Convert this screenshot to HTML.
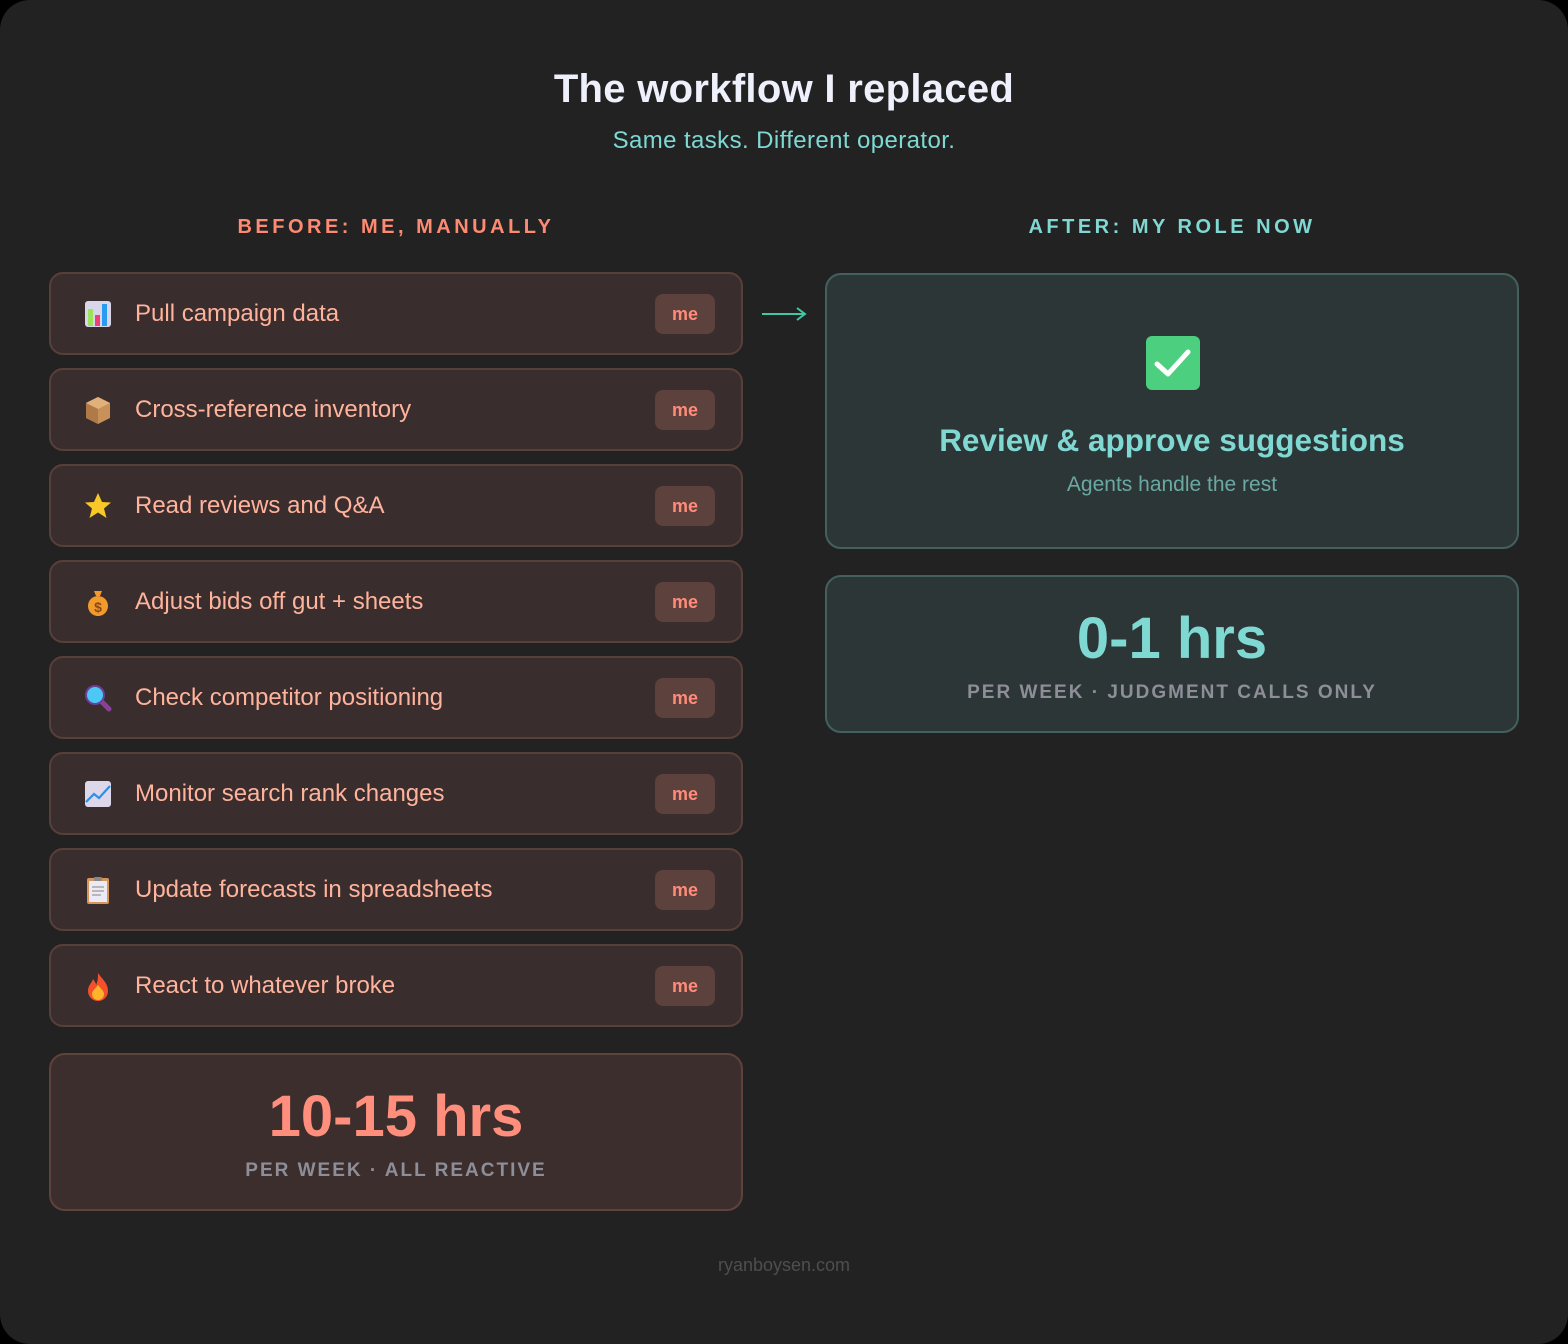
<!DOCTYPE html>
<html><head><meta charset="utf-8"><style>
*{box-sizing:border-box;margin:0;padding:0}
html,body{width:1568px;height:1344px;background:#000;overflow:hidden}
body{font-family:"Liberation Sans",sans-serif}
.wrap{position:absolute;left:0;top:0;width:1568px;height:1344px;background:#222222;border-radius:30px}
.abs{position:absolute}
h1{position:absolute;top:67px;width:100%;text-align:center;color:#eef0fb;font-size:40px;font-weight:bold;letter-spacing:0.3px}
.sub{top:127px;width:100%;text-align:center;color:#7fd8d2;font-size:24px;letter-spacing:0.4px}
.hd{top:216px;font-size:20px;font-weight:bold;letter-spacing:3.5px;text-align:center}
.card{position:absolute;left:49px;width:694px;height:83px;background:#3a2d2d;border:2px solid #573f3a;border-radius:14px}
.card .ic{position:absolute;left:32px;top:25px;width:30px;height:30px}
.card .t{position:absolute;left:84px;top:26px;font-size:24px;color:#ffb39c}
.card .me{position:absolute;left:604px;top:20px;width:60px;height:40px;background:#5c413c;border-radius:8px;color:#ff8b78;font-weight:bold;font-size:18px;text-align:center;line-height:40px}
.big{position:absolute;border-radius:16px;text-align:center}
</style></head><body><div class="wrap">
<h1>The workflow I replaced</h1>
<div class="abs sub">Same tasks. Different operator.</div>
<div class="abs hd" style="left:49px;width:694px;color:#ff8a72">BEFORE: ME, MANUALLY</div>
<div class="abs hd" style="left:825px;width:694px;color:#7fd8d2">AFTER: MY ROLE NOW</div>

<div class="card" style="top:272px"><svg class="ic" viewBox="0 0 30 30"><rect x="2" y="2" width="26" height="26" rx="3" fill="#d8d6e8"/><rect x="5" y="10" width="5" height="17" fill="#9be35a"/><rect x="12" y="16" width="5" height="11" fill="#ef3f7b"/><rect x="19" y="5" width="5" height="22" fill="#2a9bf0"/></svg><div class="t">Pull campaign data</div><div class="me">me</div></div>
<div class="card" style="top:368px"><svg class="ic" viewBox="0 0 30 30"><path d="M15 2L27 8V23L15 29L3 23V8Z" fill="#c8915a"/><path d="M3 8L15 14L27 8L15 2Z" fill="#e2b07a"/><path d="M15 14V29L3 23V8Z" fill="#b07a48"/></svg><div class="t">Cross-reference inventory</div><div class="me">me</div></div>
<div class="card" style="top:464px"><svg class="ic" viewBox="0 0 30 30"><path d="M15 2L19 11L28 11.5L21 17.5L23.5 27L15 21.5L6.5 27L9 17.5L2 11.5L11 11Z" fill="#f8c829"/></svg><div class="t">Read reviews and Q&amp;A</div><div class="me">me</div></div>
<div class="card" style="top:560px"><svg class="ic" viewBox="0 0 30 30"><circle cx="15" cy="19" r="10" fill="#f39a2c"/><path d="M11 4h8l-2 5h-4z" fill="#f39a2c"/><text x="15" y="25" font-size="14" font-weight="bold" text-anchor="middle" fill="#8a4a16" font-family="Liberation Sans">$</text></svg><div class="t">Adjust bids off gut + sheets</div><div class="me">me</div></div>
<div class="card" style="top:656px"><svg class="ic" viewBox="0 0 30 30"><path d="M18 18L26 26" stroke="#8c3f9a" stroke-width="5" stroke-linecap="round"/><circle cx="12" cy="12" r="9" fill="#4cc8f4" stroke="#6b3f9a" stroke-width="2"/></svg><div class="t">Check competitor positioning</div><div class="me">me</div></div>
<div class="card" style="top:752px"><svg class="ic" viewBox="0 0 30 30"><rect x="2" y="2" width="26" height="26" rx="3" fill="#dcd8ea"/><path d="M3 23L11 15L16 19L27 7" stroke="#2e8ee8" stroke-width="2.2" fill="none"/></svg><div class="t">Monitor search rank changes</div><div class="me">me</div></div>
<div class="card" style="top:848px"><svg class="ic" viewBox="0 0 30 30"><rect x="4" y="3" width="22" height="26" rx="2" fill="#d8955a"/><rect x="6" y="6" width="18" height="21" fill="#ecebf5"/><rect x="11" y="2" width="8" height="4" rx="1" fill="#888"/><path d="M9 12h12M9 16h12M9 20h9" stroke="#999" stroke-width="1.3"/></svg><div class="t">Update forecasts in spreadsheets</div><div class="me">me</div></div>
<div class="card" style="top:944px"><svg class="ic" viewBox="0 0 30 30"><path d="M15 2C19 8 25 12 25 20A10 10 0 0 1 5 20C5 14 9 12 10 8C12 11 13 12 13 14C15 10 15 6 15 2Z" fill="#f4502c"/><path d="M15 14C18 18 21 20 21 23A6 6 0 0 1 9 23C9 20 12 18 15 14Z" fill="#fcb52a"/></svg><div class="t">React to whatever broke</div><div class="me">me</div></div>

<div class="big" style="left:49px;top:1053px;width:694px;height:158px;background:#3d2e2e;border:2px solid #5f423c"><div style="margin-top:28px;font-size:58px;font-weight:bold;color:#ff8f7c">10-15 hrs</div><div style="margin-top:10px;font-size:19px;letter-spacing:2px;color:#8d8e98;font-weight:bold">PER WEEK · ALL REACTIVE</div></div>

<svg class="abs" style="left:760px;top:305px" width="48" height="18" viewBox="0 0 48 18"><path d="M2 9H44M37 3L45 9L37 15" stroke="#3fc7a6" stroke-width="2" fill="none"/></svg>

<div class="big" style="left:825px;top:273px;width:694px;height:276px;background:#2d3637;border:2px solid #43605d">
<svg style="position:absolute;left:318px;top:60px" width="56" height="56" viewBox="0 0 56 56"><rect x="1" y="1" width="54" height="54" rx="6" fill="#4ccf7f"/><path d="M12 29L23 39L43 17" stroke="#fff" stroke-width="5" fill="none" stroke-linecap="round" stroke-linejoin="round"/></svg>
<div style="position:absolute;top:147px;width:100%;font-size:31.5px;font-weight:bold;color:#7fd8d2">Review &amp; approve suggestions</div>
<div style="position:absolute;top:198px;width:100%;font-size:21px;color:#6aa8a3">Agents handle the rest</div></div>

<div class="big" style="left:825px;top:575px;width:694px;height:158px;background:#2d3637;border:2px solid #43605d"><div style="margin-top:28px;font-size:58px;font-weight:bold;color:#7fd8d2">0-1 hrs</div><div style="margin-top:10px;font-size:19px;letter-spacing:2px;color:#8d8e98;font-weight:bold">PER WEEK · JUDGMENT CALLS ONLY</div></div>

<div class="abs" style="top:1255px;width:100%;text-align:center;font-size:18px;color:#4e4e4e">ryanboysen.com</div>
</div></body></html>
